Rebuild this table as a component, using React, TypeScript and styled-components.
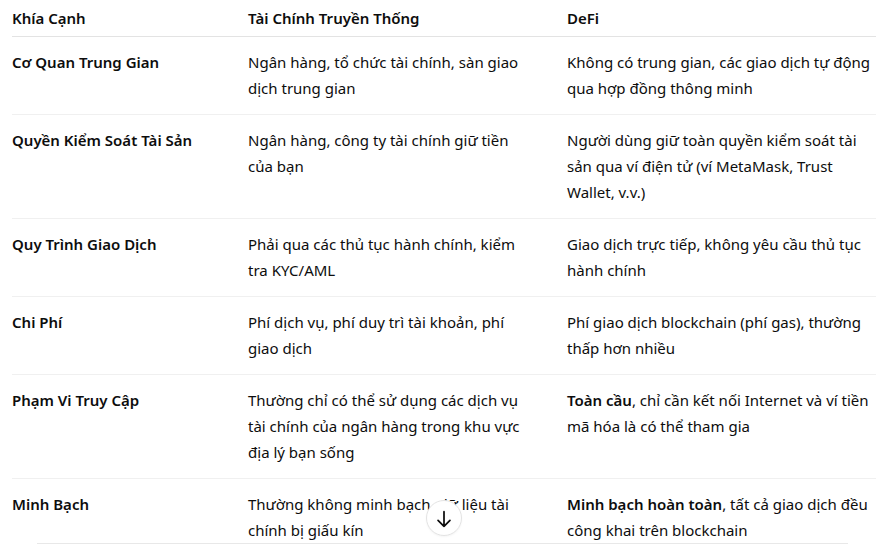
import React from 'react';
import styled, { createGlobalStyle } from 'styled-components';

const GlobalStyle = createGlobalStyle`
	html, body {
		margin: 0;
		padding: 0;
		background: #ffffff;
		overflow: hidden;
	}
	body {
		font-family: 'Noto Sans', 'Open Sans', sans-serif;
		color: #0d0d0d;
		-webkit-font-smoothing: antialiased;
	}
`;

const Page = styled.div`
	width: 890px;
	height: 544px;
	padding: 5px 14px 0 12px;
	box-sizing: border-box;
	overflow: hidden;
`;

const Table = styled.table`
	width: 864px;
	border-collapse: collapse;
	table-layout: fixed;
	font-size: 15px;
	line-height: 26px;
`;

const Col = styled.col<{ $w: number }>`
	width: ${p => p.$w}px;
`;

const HeadCell = styled.th`
	text-align: left;
	font-weight: 600;
	padding: 0 16px 5px;
	border-bottom: 1px solid #e3e3e3;
	vertical-align: bottom;

	&:first-child {
		padding-left: 0;
	}
	&:last-child {
		padding-right: 0;
	}
`;

const Row = styled.tr`
	border-bottom: 1px solid #f0f0f0;
`;

const Cell = styled.td<{ $strong?: boolean }>`
	padding: 12px 16px 13px;
	vertical-align: top;
	font-weight: ${p => (p.$strong ? 600 : 400)};

	&:first-child {
		padding-left: 0;
	}
	&:last-child {
		padding-right: 0;
	}
`;

const Line = styled.span`
	display: block;
	white-space: nowrap;
`;

const B = styled.strong`
	font-weight: 600;
`;

const ScrollButton = styled.button`
	position: fixed;
	left: 426px;
	top: 500px;
	width: 36px;
	height: 36px;
	box-sizing: border-box;
	border-radius: 50%;
	border: 1px solid #e3e3e3;
	background: #ffffff;
	color: #0d0d0d;
	display: flex;
	align-items: center;
	justify-content: center;
	padding: 2px 0 0;
	box-shadow: 0 1px 2px rgba(0, 0, 0, 0.04);
	cursor: pointer;
`;

const ComposerEdge = styled.div`
	position: fixed;
	left: 37px;
	right: 42px;
	bottom: 0;
	height: 1px;
	background: #e8e8e8;
`;

function ArrowDownIcon() {
	return (
		<svg width="22" height="22" viewBox="0 0 24 24" fill="none">
			<path
				d="M12 4v16M5.5 13.5 12 20l6.5-6.5"
				stroke="currentColor"
				strokeWidth="1.9"
				strokeLinecap="round"
				strokeLinejoin="round"
			/>
		</svg>
	);
}

type RowData = {
	aspect: string;
	tradfi: React.ReactNode[];
	defi: React.ReactNode[];
};

const rows: RowData[] = [
	{
		aspect: 'Cơ Quan Trung Gian',
		tradfi: ['Ngân hàng, tổ chức tài chính, sàn giao', 'dịch trung gian'],
		defi: ['Không có trung gian, các giao dịch tự động', 'qua hợp đồng thông minh']
	},
	{
		aspect: 'Quyền Kiểm Soát Tài Sản',
		tradfi: ['Ngân hàng, công ty tài chính giữ tiền', 'của bạn'],
		defi: [
			'Người dùng giữ toàn quyền kiểm soát tài',
			'sản qua ví điện tử (ví MetaMask, Trust',
			'Wallet, v.v.)'
		]
	},
	{
		aspect: 'Quy Trình Giao Dịch',
		tradfi: ['Phải qua các thủ tục hành chính, kiểm', 'tra KYC/AML'],
		defi: ['Giao dịch trực tiếp, không yêu cầu thủ tục', 'hành chính']
	},
	{
		aspect: 'Chi Phí',
		tradfi: ['Phí dịch vụ, phí duy trì tài khoản, phí', 'giao dịch'],
		defi: ['Phí giao dịch blockchain (phí gas), thường', 'thấp hơn nhiều']
	},
	{
		aspect: 'Phạm Vi Truy Cập',
		tradfi: [
			'Thường chỉ có thể sử dụng các dịch vụ',
			'tài chính của ngân hàng trong khu vực',
			'địa lý bạn sống'
		],
		defi: [
			<>
				<B>Toàn cầu</B>, chỉ cần kết nối Internet và ví tiền
			</>,
			'mã hóa là có thể tham gia'
		]
	},
	{
		aspect: 'Minh Bạch',
		tradfi: ['Thường không minh bạch, dữ liệu tài', 'chính bị giấu kín'],
		defi: [
			<>
				<B>Minh bạch hoàn toàn</B>, tất cả giao dịch đều
			</>,
			'công khai trên blockchain'
		]
	}
];

export default function App() {
	return (
		<>
			<GlobalStyle />
			<Page>
				<Table>
					<colgroup>
						<Col $w={220} />
						<Col $w={319} />
						<Col $w={325} />
					</colgroup>
					<thead>
						<tr>
							<HeadCell>Khía Cạnh</HeadCell>
							<HeadCell>Tài Chính Truyền Thống</HeadCell>
							<HeadCell>DeFi</HeadCell>
						</tr>
					</thead>
					<tbody>
						{rows.map((row, index) => (
							<Row key={index}>
								<Cell $strong>{row.aspect}</Cell>
								<Cell>
									{row.tradfi.map((line, i) => (
										<Line key={i}>{line}</Line>
									))}
								</Cell>
								<Cell>
									{row.defi.map((line, i) => (
										<Line key={i}>{line}</Line>
									))}
								</Cell>
							</Row>
						))}
					</tbody>
				</Table>
			</Page>
			<ScrollButton aria-label="Cuộn xuống">
				<ArrowDownIcon />
			</ScrollButton>
			<ComposerEdge />
		</>
	);
}
